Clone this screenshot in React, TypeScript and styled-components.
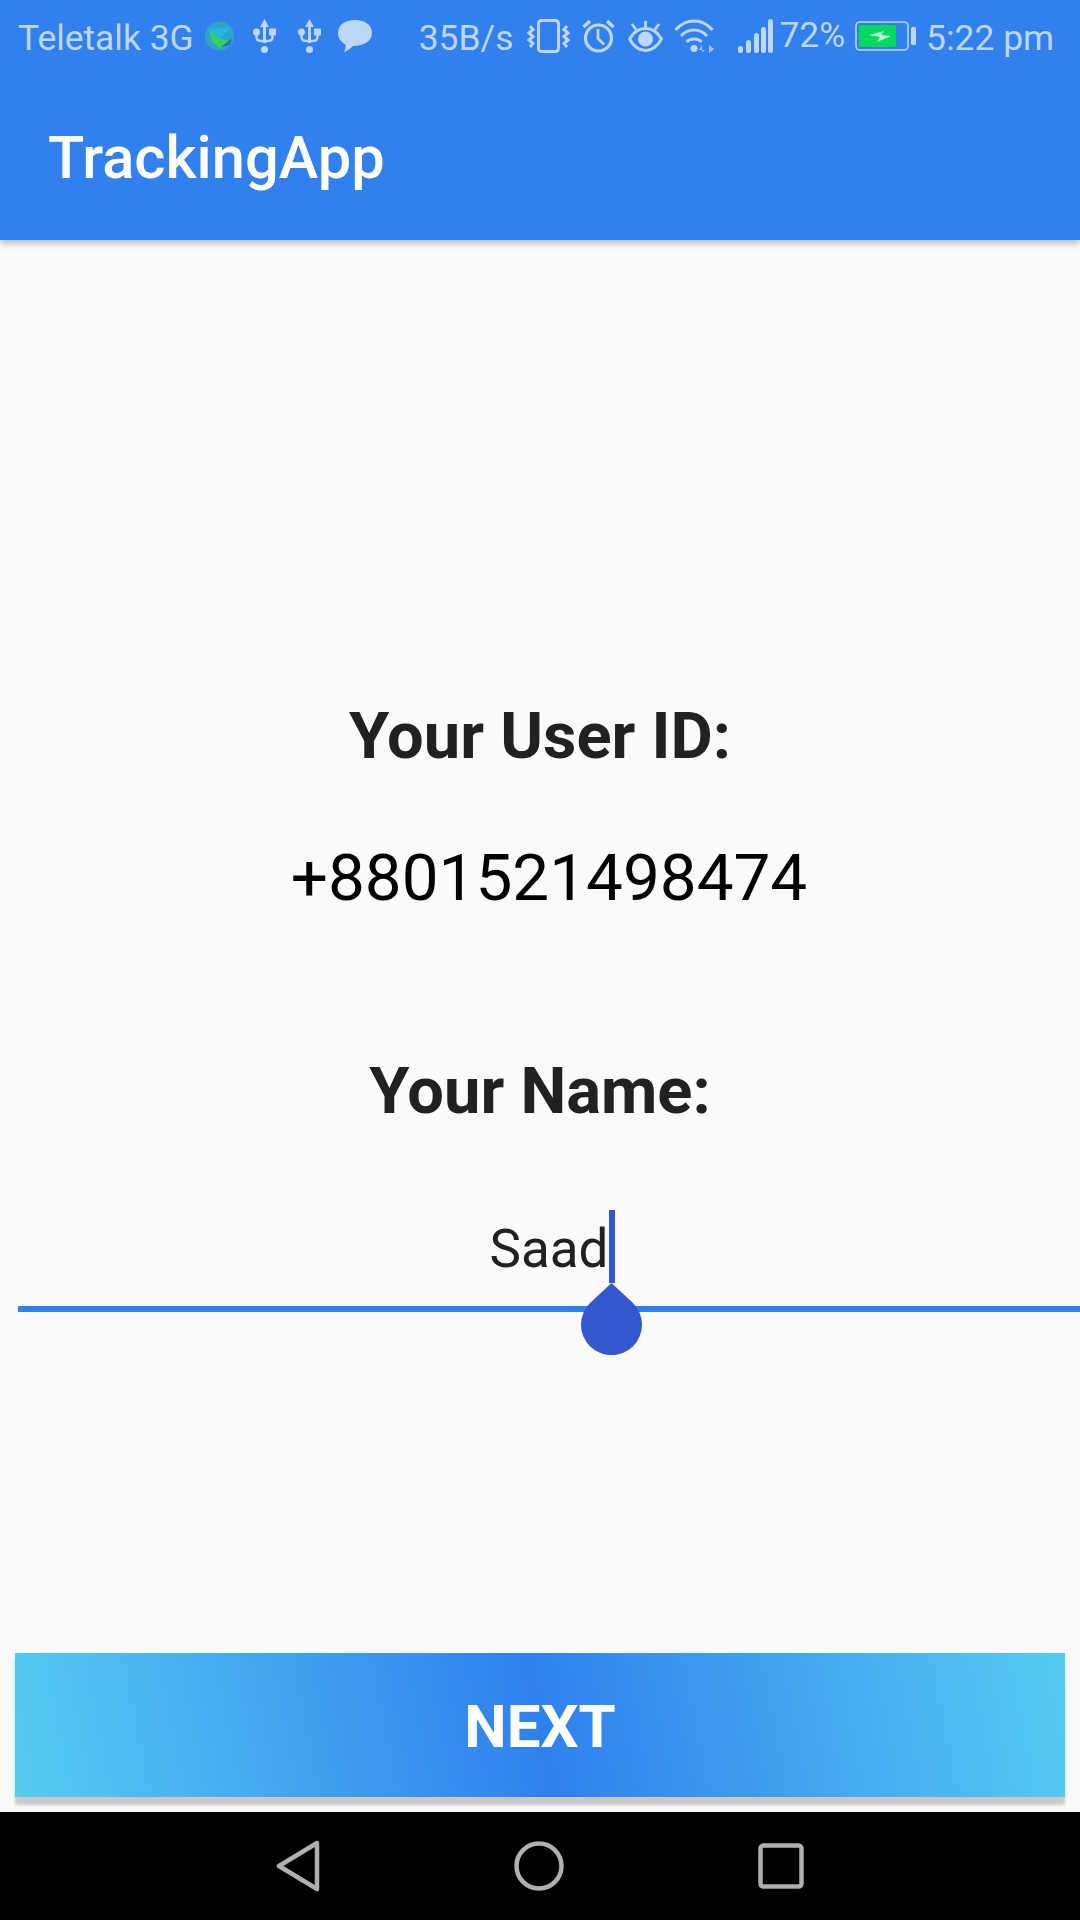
import React from "react";
import styled, { createGlobalStyle } from "styled-components";

const Global = createGlobalStyle`
  html, body { margin: 0; padding: 0; background: #fafafa; }
  * { box-sizing: border-box; }
`;

const Screen = styled.div`
  width: 1080px;
  height: 1920px;
  display: flex;
  flex-direction: column;
  overflow: hidden;
  background: #fafafa;
  font-family: Roboto, "Liberation Sans", sans-serif;
`;

const Header = styled.header`
  height: 240px;
  flex: none;
  background: #3180ee;
  box-shadow: 0 3px 7px rgba(0, 0, 0, 0.28);
  position: relative;
  z-index: 1;
`;

const StatusBar = styled.div`
  height: 72px;
  display: flex;
  align-items: center;
  padding-left: 18px;
  color: #bdd7fb;
`;

const StatusText = styled.span<{ $left?: number; $raise?: number }>`
  font-size: 35.4px;
  line-height: 72px;
  white-space: nowrap;
  margin-left: ${(p) => p.$left ?? 0}px;
  transform: translateY(${(p) => -(p.$raise ?? -2)}px);
`;

const StatusIcon = styled.svg<{ $left: number }>`
  flex: none;
  display: block;
  margin-left: ${(p) => p.$left}px;
`;

const AppTitle = styled.h1`
  margin: 0;
  padding-left: 48px;
  height: 168px;
  line-height: 172px;
  font-size: 59.6px;
  font-weight: 500;
  color: #fff;
`;

const Main = styled.main`
  flex: 1;
  display: flex;
  flex-direction: column;
  align-items: center;
  padding-top: 460px;
`;

const Label = styled.div<{ $top?: number }>`
  font-size: 65px;
  line-height: 72px;
  font-weight: 700;
  color: #212121;
  margin-top: ${(p) => p.$top ?? 0}px;
`;

const UserId = styled.div`
  font-size: 65.6px;
  line-height: 76px;
  margin: 68px 0 0 18px;
  color: #000;
`;

const NameField = styled.div`
  align-self: stretch;
  margin: 86px 0 0 18px;
  height: 99px;
  border-bottom: 6px solid #3180ee;
  display: flex;
  justify-content: center;
  position: relative;
`;

const NameValue = styled.span`
  font-size: 53px;
  line-height: 72px;
  height: 72px;
  color: #212121;
  position: relative;
`;

const Caret = styled.i`
  position: absolute;
  left: 100%;
  top: -3px;
  width: 6px;
  height: 73px;
  background: #3358ce;
`;

const Handle = styled.svg`
  position: absolute;
  left: calc(100% - 28px);
  top: 70px;
`;

const NextButton = styled.button`
  flex: none;
  width: 1050px;
  height: 144px;
  margin: 0 15px 15px;
  border: 0;
  padding: 3px 0 0;
  font-family: inherit;
  font-size: 60px;
  font-weight: 700;
  color: #fff;
  background: linear-gradient(79deg, #56ccf2 0%, #2f80ed 50%, #56ccf2 100%);
  box-shadow: 0 8px 3px rgba(0, 0, 0, 0.2);
`;

const NavBar = styled.nav`
  flex: none;
  height: 108px;
  background: #000;
  display: flex;
  justify-content: center;
  align-items: center;
  gap: 194px;
`;

const NavIcon = styled.svg`
  display: block;
  flex: none;
`;

const Usb = ({ left }: { left: number }) => (
  <StatusIcon $left={left} width="23" height="34" viewBox="0 0 23 34">
    <path d="M11.5 0 L16 8 H13 V24 H10 V8 H7 Z" fill="#bdd7fb" />
    <circle cx="11.5" cy="30.5" r="3.5" fill="#bdd7fb" />
    <circle cx="3.5" cy="13" r="3.5" fill="#bdd7fb" />
    <rect x="16" y="9.5" width="7" height="7" rx="1" fill="#bdd7fb" />
    <path d="M3.5 14 V18 Q3.5 22 8 22 H15 Q19.5 22 19.5 18 V14" fill="none" stroke="#bdd7fb" strokeWidth="2.4" />
  </StatusIcon>
);

export default function App() {
  return (
    <Screen>
      <Global />
      <Header>
        <StatusBar>
          <StatusText>Teletalk 3G</StatusText>
          <StatusIcon $left={11} width="29" height="30" viewBox="0 0 29 30">
            <circle cx="14.5" cy="15" r="14.5" fill="#2ea5c8" />
            <path d="M3 8 L26 6 L15 18 Z" fill="#1fb6e8" />
            <path d="M4 9 L14 17 L24 20 L15 27 L8 22 Z" fill="#34d058" />
            <path d="M16 26 L27 17 L25 24 Z" fill="#2b6fb8" />
          </StatusIcon>
          <Usb left={19} />
          <Usb left={22} />
          <StatusIcon $left={17} width="34" height="32" viewBox="0 0 34 32">
            <path d="M17 0 C27 0 34 5 34 13 C34 21 26 26 15 26 C13 28 9 31 6 32 C7 30 8 27 7.5 24.5 C3 22 0 18 0 13 C0 5 7 0 17 0 Z" fill="#bdd7fb" />
          </StatusIcon>
          <StatusText $left={47}>35B/s</StatusText>
          <StatusIcon $left={14} width="43" height="34" viewBox="0 0 43 34">
            <rect x="11.5" y="1.5" width="20" height="31" rx="3" fill="none" stroke="#bdd7fb" strokeWidth="3" />
            <path d="M3 7 L6 10.5 L2 14 L6 17.5 L2 21 L6 24.5 L3 28 M40 7 L37 10.5 L41 14 L37 17.5 L41 21 L37 24.5 L40 28" fill="none" stroke="#bdd7fb" strokeWidth="3" />
          </StatusIcon>
          <StatusIcon $left={12} width="33" height="34" viewBox="0 0 33 34">
            <circle cx="16.5" cy="19" r="13" fill="none" stroke="#bdd7fb" strokeWidth="3.2" />
            <path d="M16 10 V19.5 L22 25.5" fill="none" stroke="#bdd7fb" strokeWidth="2.8" />
            <path d="M1.5 8 L8 2 M31.5 8 L25 2" stroke="#bdd7fb" strokeWidth="3.6" />
          </StatusIcon>
          <StatusIcon $left={13} width="35" height="31" viewBox="0 0 35 31">
            <path d="M1.5 18 C6 10 12 7.5 17.5 7.5 C23 7.5 29 10 33.5 18 C29 26 23 29.5 17.5 29.5 C12 29.5 6 26 1.5 18 Z" fill="none" stroke="#bdd7fb" strokeWidth="3" />
            <circle cx="17.5" cy="18" r="7.5" fill="#bdd7fb" />
            <path d="M17.5 0 V6 M4 3 L8 8.5 M31 3 L27 8.5" stroke="#bdd7fb" strokeWidth="2.8" />
          </StatusIcon>
          <StatusIcon $left={11} width="40" height="34" viewBox="0 0 40 34">
            <path d="M1.5 11 C12 -1 28 -1 38.5 11 M7 17 C14 9 26 9 33 17 M12.5 23 C16 19 24 19 27.5 23" fill="none" stroke="#bdd7fb" strokeWidth="3" />
            <circle cx="20" cy="29.5" r="3.5" fill="#bdd7fb" />
            <path d="M35 26 L40 30 L35 34 Z M28 33 V26 L25 31 H31" fill="#a5c8f8" />
          </StatusIcon>
          <StatusIcon $left={24} width="35" height="34" viewBox="0 0 35 34">
            <rect x="0" y="27" width="5" height="7" rx="2.5" fill="#bdd7fb" />
            <rect x="8" y="21" width="5" height="13" rx="2.5" fill="#bdd7fb" />
            <rect x="16" y="14" width="5" height="20" rx="2.5" fill="#bdd7fb" />
            <rect x="23" y="8" width="5" height="26" rx="2.5" fill="#bdd7fb" />
            <rect x="30" y="0" width="5" height="34" rx="2.5" fill="#bdd7fb" />
          </StatusIcon>
          <StatusText $left={6} $raise={1}>72%</StatusText>
          <StatusIcon $left={10} width="61" height="30" viewBox="0 0 61 30">
            <rect x="1" y="1" width="52" height="28" rx="4" fill="none" stroke="#bdd7fb" strokeWidth="1.6" />
            <rect x="4" y="4" width="37" height="22" fill="#04d95c" />
            <path d="M14 14 L29 10 L26 14 L36 15 L22 21 L25 16 Z" fill="#b7f7cf" />
            <rect x="56" y="6" width="5" height="18" rx="1.5" fill="#bdd7fb" />
          </StatusIcon>
          <StatusText $left={10}>5:22 pm</StatusText>
        </StatusBar>
        <AppTitle>TrackingApp</AppTitle>
      </Header>
      <Main>
        <Label>Your User ID:</Label>
        <UserId>+8801521498474</UserId>
        <Label $top={139}>Your Name:</Label>
        <NameField>
          <NameValue>
            Saad
            <Caret />
            <Handle width="61" height="72" viewBox="0 0 61 72">
              <path d="M30.5 0 L52 20 A30.5 30.5 0 1 1 9 20 Z" fill="#3358ce" />
            </Handle>
          </NameValue>
        </NameField>
      </Main>
      <NextButton>NEXT</NextButton>
      <NavBar>
        <NavIcon width="44" height="52" viewBox="0 0 44 52">
          <path d="M41 3 L3 26 L41 49 Z" fill="none" stroke="#b0b0b0" strokeWidth="4.5" strokeLinejoin="round" />
        </NavIcon>
        <NavIcon width="50" height="50" viewBox="0 0 50 50">
          <circle cx="25" cy="25" r="22.5" fill="none" stroke="#b0b0b0" strokeWidth="4.5" />
        </NavIcon>
        <NavIcon width="46" height="46" viewBox="0 0 46 46">
          <rect x="2.5" y="2.5" width="41" height="41" rx="3" fill="none" stroke="#b0b0b0" strokeWidth="4.5" />
        </NavIcon>
      </NavBar>
    </Screen>
  );
}
